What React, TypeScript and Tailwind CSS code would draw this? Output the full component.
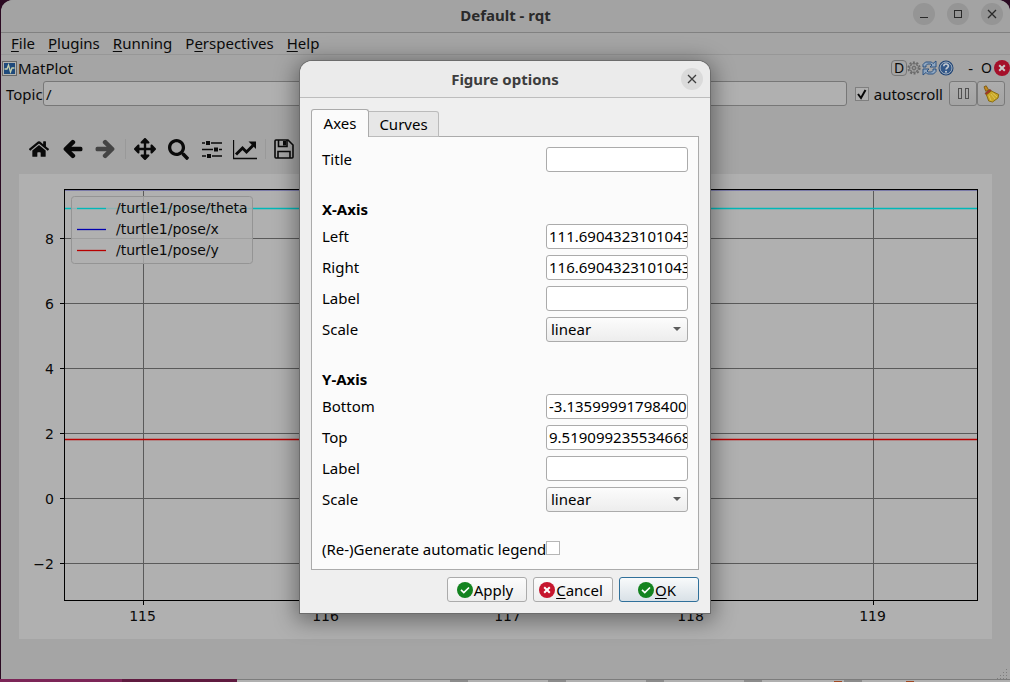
import { useState, type ReactNode } from 'react';
import { FaArrowLeft, FaArrowRight, FaArrowsAlt, FaHome, FaSearch } from 'react-icons/fa';

interface MenuEntry {
  before: string;
  key: string;
  after: string;
}

const menu: MenuEntry[] = [
  { before: '', key: 'F', after: 'ile' },
  { before: '', key: 'P', after: 'lugins' },
  { before: '', key: 'R', after: 'unning' },
  { before: 'P', key: 'e', after: 'rspectives' },
  { before: '', key: 'H', after: 'elp' },
];

const xTicks = [
  { label: '115', x: 124.5 },
  { label: '116', x: 307.5 },
  { label: '117', x: 489.5 },
  { label: '118', x: 672.5 },
  { label: '119', x: 854.5 },
];

const yTicks = [
  { label: '8', y: 64.5 },
  { label: '6', y: 129.5 },
  { label: '4', y: 194.5 },
  { label: '2', y: 259.5 },
  { label: '0', y: 324.5 },
  { label: '−2', y: 389.5 },
];

const series = [
  { name: '/turtle1/pose/theta', color: '#00b8b8', y: 34.5 },
  { name: '/turtle1/pose/x', color: '#0000b0', y: 55.5 },
  { name: '/turtle1/pose/y', color: '#b80000', y: 76.5 },
];

/* ---------- icons ---------- */

function SlidersIcon() {
  return (
    <svg width="22" height="20" viewBox="0 0 22 20" aria-hidden="true">
      <path d="M1 4h20M1 10.500h20M1 17h20" stroke="#0a0a0a" strokeWidth="1.500" />
      <path d="M5 2h4v4H5zM13 8.500h4v4h-4zM6 15h4v4H6z" fill="#0a0a0a" />
      <path d="M4.500 1v6M9.500 1v6M12.500 7.500v6M17.500 7.500v6M5.500 14v6M10.500 14v6" stroke="#a5a5a5" />
    </svg>
  );
}

function ChartIcon() {
  return (
    <svg width="24" height="22" viewBox="0 0 24 22" aria-hidden="true">
      <path d="M.5 2v18.500H24" fill="none" stroke="#0a0a0a" strokeWidth="1.300" />
      <path d="M3 16.500l6.500-6.500 4 4L20 7.500" fill="none" stroke="#0a0a0a" strokeWidth="3" />
      <path d="M15.500 3.500H23V11z" fill="#0a0a0a" />
    </svg>
  );
}

function SaveIcon() {
  return (
    <svg width="20" height="20" viewBox="0 0 20 20" aria-hidden="true">
      <path
        d="M1 2a1 1 0 0 1 1-1h12l5 5v12a1 1 0 0 1-1 1H2a1 1 0 0 1-1-1z"
        fill="none"
        stroke="#0a0a0a"
        strokeWidth="1.600"
      />
      <path d="M4.500 1v6.500H13V1M4 19v-6.500h12V19" fill="none" stroke="#0a0a0a" strokeWidth="1.600" />
      <path d="M9 2h3v4.500H9z" fill="#0a0a0a" />
    </svg>
  );
}

function PlotIcon() {
  return (
    <svg width="15" height="15" viewBox="0 0 15 15" aria-hidden="true">
      <rect x=".5" y=".5" width="14" height="14" fill="#b4b4b0" stroke="#666" />
      <rect x="2" y="2" width="11" height="11" fill="#1f4a7c" />
      <path d="M2.500 8H5l1.500-4 2 7 1.500-4h2.500" fill="none" stroke="#c4cfae" strokeWidth="1.300" />
    </svg>
  );
}

function GearIcon() {
  return (
    <svg width="14" height="14" viewBox="0 0 14 14" aria-hidden="true">
      <circle cx="7" cy="7" r="5.700" fill="none" stroke="#696969" strokeWidth="1.800" strokeDasharray="2 1.580" />
      <circle cx="7" cy="7" r="4.500" fill="#a2a2a2" stroke="#696969" />
      <path d="M7 2.500v9M2.500 7h9M3.800 3.800l6.400 6.400M10.200 3.800l-6.400 6.400" stroke="#777" strokeWidth=".8" />
      <circle cx="7" cy="7" r="1.500" fill="#a5a5a5" stroke="#696969" />
    </svg>
  );
}

function RefreshIcon() {
  return (
    <svg width="15" height="16" viewBox="0 0 15 16" aria-hidden="true">
      <path
        d="M1 7V4.500L3.500 2h6L11 3.500 14 1v6H8l2-2-1-1H5.500L4 5.500V7z"
        fill="#8fa6c0"
        stroke="#234b7d"
        strokeWidth=".9"
      />
      <path
        d="M14 9v2.500L11.500 14h-6L4 12.500 1 15V9h6l-2 2 1 1h3.500L11 10.500V9z"
        fill="#8fa6c0"
        stroke="#234b7d"
        strokeWidth=".9"
      />
    </svg>
  );
}

function HelpIcon() {
  return (
    <svg width="16" height="16" viewBox="0 0 16 16" aria-hidden="true">
      <circle cx="8" cy="8" r="7.500" fill="#1d4274" />
      <circle cx="8" cy="8" r="6" fill="#34598a" stroke="#a9b4c1" />
      <path
        d="M5.800 6.300c0-3 4.600-2.900 4.600-.2C10.400 7.700 8 7.800 8 9.600"
        fill="none"
        stroke="#c5cbd2"
        strokeWidth="1.600"
      />
      <circle cx="8" cy="11.700" r="1" fill="#c5cbd2" />
    </svg>
  );
}

function BroomIcon() {
  return (
    <svg width="18" height="18" viewBox="0 0 18 18" aria-hidden="true">
      <path d="M2 1.800 4.200.8l2.400 4-2.800 1.600z" fill="#c48a20" stroke="#76520a" strokeWidth=".8" />
      <path d="M3 8.300 8 4.300l1.800 2.200-5 4z" fill="#a83226" stroke="#6b3a10" strokeWidth=".6" />
      <path d="M4.500 9.800 9.300 6l7.400 3.500-.7 3.500-5.500 4-3.800-1z" fill="#c9a727" stroke="#84670a" strokeWidth=".9" />
      <path d="M7 10.500l2 5M9 9l4 5M10.500 8l4.500 4" stroke="#e2cc62" strokeWidth=".8" />
    </svg>
  );
}

function StatusIcon({ kind, dim }: { kind: 'ok' | 'cancel'; dim?: boolean }) {
  const fill = kind === 'ok' ? '#13831f' : dim ? '#a5102a' : '#c6162e';
  return (
    <svg width="16" height="16" viewBox="0 0 16 16" className="shrink-0" aria-hidden="true">
      <circle cx="8" cy="8" r="8" fill={fill} />
      {kind === 'ok' ? (
        <path d="M4 7.800l2.800 2.700L12 5.500" fill="none" stroke="#fff" strokeWidth="1.700" />
      ) : (
        <path d="M5.200 5.200l5.600 5.600M10.800 5.200l-5.600 5.600" stroke={dim ? '#c8c8c8' : '#fff'} strokeWidth="2" />
      )}
    </svg>
  );
}

function CrossIcon() {
  return (
    <svg width="10" height="10" viewBox="0 0 10 10" aria-hidden="true">
      <path d="M1 1l8 8M9 1l-8 8" stroke="currentColor" strokeWidth="1.300" />
    </svg>
  );
}

/* ---------- main window ---------- */

function RoundButton({ label, className, children }: { label: string; className: string; children: ReactNode }) {
  return (
    <button aria-label={label} className={`flex items-center justify-center rounded-full ${className}`}>
      {children}
    </button>
  );
}

function WindowTitleBar() {
  return (
    <header className="grid h-[33px] grid-cols-[1fr_auto_1fr] items-center rounded-t-xl border-b border-[#818181] bg-[#a3a3a3] px-[7px] text-[#2a2a2a]">
      <h1 className="col-start-2 pb-0.5 font-bold">Default - rqt</h1>
      <div className="flex justify-end gap-3 pb-1">
        <RoundButton label="Minimize" className="size-[22px] bg-[#959595]">
          <span className="mt-1.5 h-px w-2 bg-[#2a2a2a]" />
        </RoundButton>
        <RoundButton label="Maximize" className="size-[22px] bg-[#959595]">
          <span className="size-2 border border-[#2a2a2a]" />
        </RoundButton>
        <RoundButton label="Close" className="size-[22px] bg-[#959595]">
          <CrossIcon />
        </RoundButton>
      </div>
    </header>
  );
}

function MenuBar() {
  return (
    <nav className="flex h-[22px] items-center gap-[13px] border-b border-[#979797] px-2.5 pb-0.5">
      {menu.map(item => (
        <button key={item.key + item.after}>
          {item.before}
          <u className="underline-offset-2">{item.key}</u>
          {item.after}
        </button>
      ))}
    </nav>
  );
}

function DockHeader() {
  return (
    <div className="flex h-[26px] items-center justify-between pl-px">
      <div className="flex items-center gap-px">
        <PlotIcon />
        <span>MatPlot</span>
      </div>
      <div className="flex items-center">
        <button className="flex h-4 w-4 items-center justify-center rounded-sm border border-[#777] text-sm">D</button>
        <button aria-label="Settings">
          <GearIcon />
        </button>
        <button aria-label="Reload" className="ml-px">
          <RefreshIcon />
        </button>
        <button aria-label="Help" className="ml-px">
          <HelpIcon />
        </button>
        <button className="ml-3.5">-</button>
        <button className="ml-2 text-sm">O</button>
        <button aria-label="Close dock" className="ml-0.5">
          <StatusIcon kind="cancel" dim />
        </button>
      </div>
    </div>
  );
}

function TopicRow() {
  const [topic, setTopic] = useState('/');
  const [autoscroll, setAutoscroll] = useState(true);

  return (
    <div className="flex h-[25px] items-center pl-[5px] pr-[5px]">
      <label htmlFor="topic" className="w-[37px] shrink-0">
        Topic
      </label>
      <input
        id="topic"
        value={topic}
        onChange={e => setTopic(e.target.value)}
        className="h-[25px] min-w-0 flex-1 rounded-[3px] border border-[#777] bg-[#b0b0b0] px-0.5 outline-none"
      />
      <label className="ml-2 flex items-center gap-[5px]">
        <span className="grid size-3.5">
          <input
            type="checkbox"
            checked={autoscroll}
            onChange={e => setAutoscroll(e.target.checked)}
            className="col-start-1 row-start-1 size-3.5 appearance-none border border-[#7f7f7f] bg-[#b0b0b0]"
          />
          {autoscroll && (
            <svg viewBox="0 0 14 14" className="pointer-events-none col-start-1 row-start-1" aria-hidden="true">
              <path d="M3 7l3 4 4.500-8" fill="none" stroke="#080808" strokeWidth="2" />
            </svg>
          )}
        </span>
        <span>autoscroll</span>
      </label>
      <button
        aria-label="Pause"
        className="ml-1.5 flex h-[25px] w-7 items-center justify-center gap-[3px] rounded-[3px] border border-[#7a7a7a] bg-linear-to-b from-[#adadad] to-[#a3a3a3]"
      >
        <span className="h-[11px] w-1 border border-[#505050]" />
        <span className="h-[11px] w-1 border border-[#505050]" />
      </button>
      <button
        aria-label="Clear"
        className="flex h-[25px] w-7 items-center justify-center rounded-[3px] border border-[#7a7a7a] bg-linear-to-b from-[#adadad] to-[#a3a3a3]"
      >
        <BroomIcon />
      </button>
    </div>
  );
}

function PlotToolbar() {
  const separator = <span className="h-5 w-px bg-[#999]" />;
  return (
    <div className="flex h-[50px] items-center pl-2.5 text-[#0a0a0a]">
      <button aria-label="Home" className="mr-3.5">
        <FaHome size={20} />
      </button>
      <button aria-label="Back" className="mr-3">
        <FaArrowLeft size={20} stroke="currentColor" strokeWidth={36} />
      </button>
      <button aria-label="Forward" className="mr-2.5 text-[#444]">
        <FaArrowRight size={20} stroke="currentColor" strokeWidth={36} />
      </button>
      {separator}
      <button aria-label="Pan" className="ml-2 mr-3">
        <FaArrowsAlt size={22} />
      </button>
      <button aria-label="Zoom" className="mr-3">
        <FaSearch size={21} />
      </button>
      <button aria-label="Subplots" className="mr-2.5">
        <SlidersIcon />
      </button>
      <button aria-label="Edit axes" className="mr-2">
        <ChartIcon />
      </button>
      {separator}
      <button aria-label="Save" className="ml-2">
        <SaveIcon />
      </button>
    </div>
  );
}

function PlotCanvas() {
  return (
    <svg
      viewBox="0 0 973 465"
      className="block w-full bg-[#b0b0b0] font-['DejaVu_Sans',sans-serif] text-sm"
      fill="#0a0a0a"
      role="img"
      aria-label="Turtle pose plot"
    >
      {xTicks.map(t => (
        <g key={t.label}>
          <path d={`M${t.x} 16V426`} stroke="#5a5a5a" />
          <path d={`M${t.x} 427v4`} stroke="#000" />
          <text x={t.x - 1} y="447" textAnchor="middle">
            {t.label}
          </text>
        </g>
      ))}
      {yTicks.map(t => (
        <g key={t.label}>
          <path d={`M46 ${t.y}H958`} stroke="#5a5a5a" />
          <path d={`M41 ${t.y}h4`} stroke="#000" />
          <text x="35" y={t.y + 5.5} textAnchor="end">
            {t.label}
          </text>
        </g>
      ))}
      <path d="M46 16.500H958" stroke="#7a7aa8" />
      <path d="M46 34.500H958" stroke="#00b8b8" strokeWidth="1.500" />
      <path d="M46 265.500H958" stroke="#b80000" strokeWidth="1.300" />
      <rect x="45.500" y="15.500" width="913" height="411" fill="none" stroke="#000" />

      {/* legend */}
      <rect x="52.500" y="22.500" width="181" height="67" rx="3" fill="#b0b0b0" fillOpacity=".8" stroke="#949494" />
      {series.map(s => (
        <g key={s.name}>
          <path d={`M58 ${s.y}h29`} stroke={s.color} strokeWidth="1.300" />
          <text x="97" y={s.y + 4}>
            {s.name}
          </text>
        </g>
      ))}
    </svg>
  );
}

function MainWindow() {
  return (
    <main className="ml-px flex flex-1 flex-col rounded-t-xl bg-[#a5a5a5] text-[#0a0a0a]">
      <WindowTitleBar />
      <MenuBar />
      <DockHeader />
      <TopicRow />
      <div className="px-[18px] pt-[18px]">
        <PlotToolbar />
        <PlotCanvas />
      </div>
      <div className="mt-auto flex justify-end pr-0.5 pt-4">
        <svg width="11" height="11" viewBox="0 0 11 11" aria-hidden="true">
          <path
            d="M0 10.500h11M3 7.500h8M6 4.500h5M9 1.500h2"
            stroke="#7d7d7d"
            strokeDasharray="1 2"
          />
        </svg>
      </div>
    </main>
  );
}

/** The slice of desktop and file manager visible under the window */
function DesktopStrip() {
  return (
    <div className="flex h-[3px]">
      <div className="w-[122px] bg-[#7c2557]" />
      <div className="w-[115px] bg-[#5f1a3f]" />
      <div className="flex flex-1 items-end border-t border-[#7c7c7c] bg-[#b0b0b0] pl-[213px]">
        <span className="mr-20 h-0.5 w-[18px] bg-[#8b8b8b]" />
        <span className="mr-20 h-0.5 w-[18px] bg-[#8b8b8b]" />
        <span className="mr-20 h-0.5 w-[18px] bg-[#8b8b8b]" />
        <span className="mr-[72px] h-0.5 w-[18px] bg-[#8b8b8b]" />
        <span className="mr-0.5 h-px w-2 bg-[#a04a25]" />
        <span className="mr-11 h-0.5 w-[18px] bg-[#8b8b8b]" />
        <span className="h-px w-2 bg-[#a04a25]" />
      </div>
    </div>
  );
}

/* ---------- dialog ---------- */

const fieldClass =
  'h-[25px] w-full min-w-0 rounded-[3px] border border-[#ababab] bg-white pb-0.5 pl-0.5 outline-none';

function TextField({ id, label, initial = '' }: { id: string; label: string; initial?: string }) {
  const [value, setValue] = useState(initial);
  return (
    <>
      <label htmlFor={id} className="pb-0.5">
        {label}
      </label>
      <input id={id} value={value} onChange={e => setValue(e.target.value)} className={fieldClass} />
    </>
  );
}

function ScaleField({ id }: { id: string }) {
  return (
    <>
      <label htmlFor={id} className="pb-0.5">
        Scale
      </label>
      <div className="relative">
        <select
          id={id}
          defaultValue="linear"
          className="block h-[25px] w-full appearance-none rounded-[3px] border border-[#ababab] bg-linear-to-b from-[#fcfcfc] to-[#ededed] pb-0.5 pl-1 outline-none"
        >
          <option>linear</option>
          <option>log</option>
          <option>symlog</option>
          <option>logit</option>
        </select>
        <svg
          width="8"
          height="4"
          viewBox="0 0 8 4"
          className="pointer-events-none absolute right-[7px] top-[10px]"
          aria-hidden="true"
        >
          <path d="M0 0h8L4 4z" fill="#5c5c5c" />
        </svg>
      </div>
    </>
  );
}

function SectionTitle({ children }: { children: ReactNode }) {
  return <h3 className="col-span-2 mt-[23px] h-[17px] font-bold leading-[17px]">{children}</h3>;
}

function AxesForm() {
  return (
    <form className="-mt-px grid grid-cols-[218px_1fr] items-center gap-1.5 border border-[#ababab] bg-[#fbfbfb] px-2.5 pb-[11px] pt-2.5">
      <TextField id="title" label="Title" />

      <SectionTitle>X-Axis</SectionTitle>
      <TextField id="x-left" label="Left" initial="111.6904323101043" />
      <TextField id="x-right" label="Right" initial="116.6904323101043" />
      <TextField id="x-label" label="Label" />
      <ScaleField id="x-scale" />

      <SectionTitle>Y-Axis</SectionTitle>
      <TextField id="y-bottom" label="Bottom" initial="-3.135999917984009" />
      <TextField id="y-top" label="Top" initial="9.519099235534668" />
      <TextField id="y-label" label="Label" />
      <ScaleField id="y-scale" />

      <label htmlFor="legend" className="mt-[23px] h-[17px] whitespace-nowrap leading-[17px]">
        (Re-)Generate automatic legend
      </label>
      <input
        id="legend"
        type="checkbox"
        className="mt-5 size-3.5 appearance-none border border-[#b6b6b6] bg-white checked:bg-[#2a6f9e]"
      />
    </form>
  );
}

function FigureOptionsDialog() {
  const buttonClass =
    'flex h-[25px] w-20 items-center justify-center gap-px rounded-[3px] border border-[#ababab] bg-linear-to-b from-[#fcfcfc] to-[#ededed] pr-1';
  return (
    <section
      role="dialog"
      aria-label="Figure options"
      className="absolute left-1/2 top-[61px] w-[410px] -translate-x-1/2 rounded-t-xl bg-[#efefef] text-black shadow-[0_0_0_1px_#6c6c6c,0_4px_22px_4px_rgba(0,0,0,0.4)]"
    >
      <header className="grid h-[37px] grid-cols-[1fr_auto_1fr] items-center rounded-t-xl border-b border-[#bdbdbd] bg-[#ebebeb] px-[7px] text-[#3d3d3d]">
        <h2 className="col-start-2 font-bold">Figure options</h2>
        <div className="flex justify-end">
          <RoundButton label="Close dialog" className="size-[22px] bg-[#dadada]">
            <CrossIcon />
          </RoundButton>
        </div>
      </header>

      <div className="p-[11px]">
        <div role="tablist" className="flex items-end">
          <button
            role="tab"
            aria-selected="true"
            className="relative z-10 h-7 w-[58px] rounded-t-[3px] border border-b-0 border-[#ababab] bg-[#fbfbfb] pb-0.5"
          >
            Axes
          </button>
          <button
            role="tab"
            aria-selected="false"
            className="h-[26px] w-[70px] rounded-tr-[3px] border border-l-0 border-[#bbb] bg-[#e7e7e7]"
          >
            Curves
          </button>
        </div>
        <AxesForm />
        <div className="mt-[7px] flex justify-end gap-1.5">
          <button className={buttonClass}>
            <StatusIcon kind="ok" />
            Apply
          </button>
          <button className={buttonClass}>
            <StatusIcon kind="cancel" />
            <span>
              <u className="underline-offset-2">C</u>ancel
            </span>
          </button>
          <button className="flex h-[25px] w-20 items-center justify-center gap-px rounded-[3px] border border-[#30709a] bg-linear-to-b from-[#f8fafb] to-[#d9e1e7] pr-1">
            <StatusIcon kind="ok" />
            <span>
              <u className="underline-offset-2">O</u>K
            </span>
          </button>
        </div>
      </div>
    </section>
  );
}

export default function App() {
  return (
    <div className="relative flex min-h-screen flex-col bg-[#2b0a22] font-['Noto_Sans','Open_Sans',sans-serif] text-[15px] leading-5">
      <MainWindow />
      <DesktopStrip />
      <FigureOptionsDialog />
    </div>
  );
}
